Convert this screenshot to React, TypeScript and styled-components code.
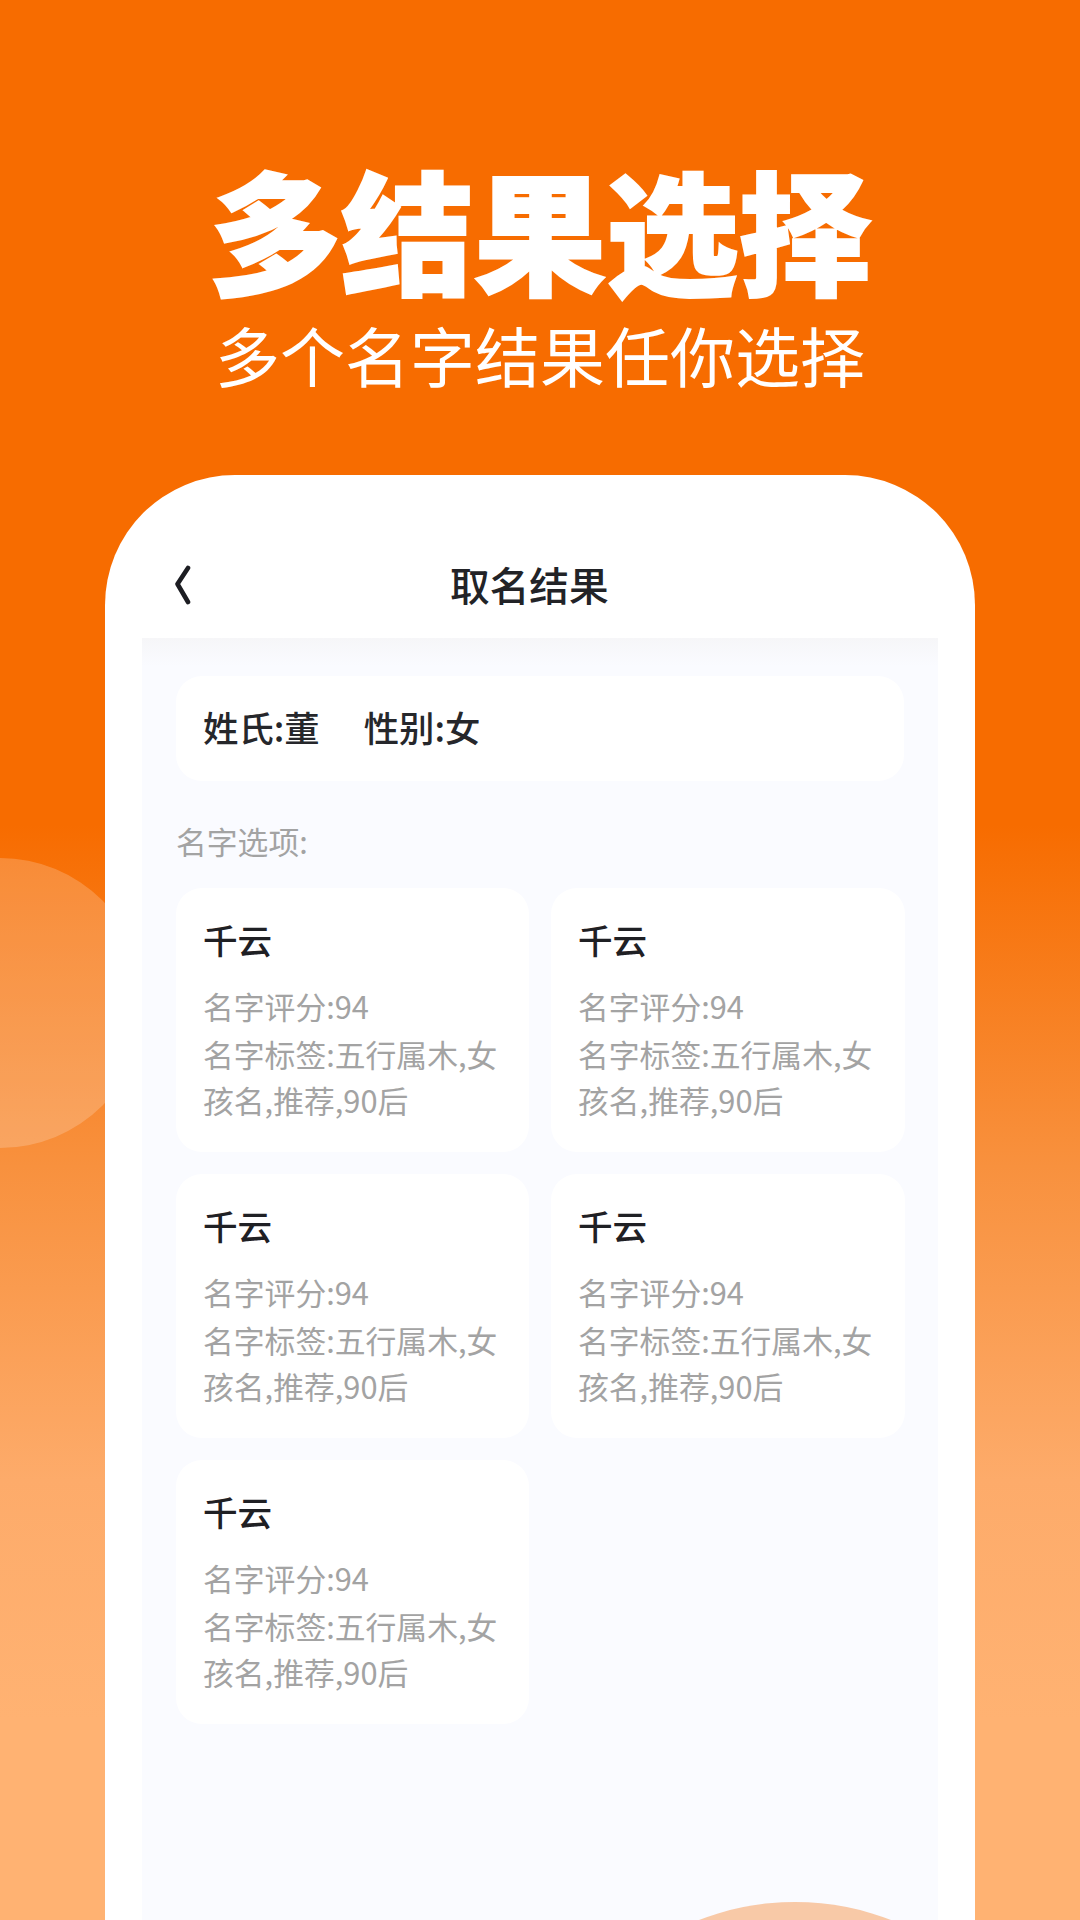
import React from "react";
import styled, { createGlobalStyle } from "styled-components";

const Global = createGlobalStyle`
  html, body { margin: 0; padding: 0; }
  body { font-family: "Noto Sans CJK SC", "Noto Sans", sans-serif; }
`;

const Screen = styled.div`
  position: relative;
  width: 1080px;
  height: 1920px;
  overflow: hidden;
  display: flex;
  flex-direction: column;
  background: linear-gradient(
    180deg,
    #f76c00 0,
    #f76c00 825px,
    #f8913e 1167px,
    #fdab6a 1480px,
    #ffb272 1720px
  );
`;

const SideCircle = styled.div`
  position: absolute;
  left: -145px;
  top: 858px;
  width: 290px;
  height: 290px;
  border-radius: 50%;
  background: rgba(255, 255, 255, 0.2);
`;

const BottomCircle = styled.div`
  position: absolute;
  left: 530px;
  top: 1902px;
  width: 530px;
  height: 530px;
  border-radius: 50%;
  background: rgba(247, 140, 60, 0.45);
`;

const Hero = styled.header`
  display: flex;
  flex-direction: column;
  align-items: center;
  height: 475px;
  padding-top: 161px;
  box-sizing: border-box;
  color: #fff;
`;

const Headline = styled.h1`
  margin: 0;
  font-size: 132.5px;
  line-height: 132px;
  font-weight: 900;
  -webkit-text-stroke: 2px #fff;
`;

const Subline = styled.p`
  margin: 17px 0 0;
  font-size: 65px;
  line-height: 88px;
  font-weight: 400;
`;

const Phone = styled.section`
  position: relative;
  flex: 1;
  margin: 0 105px;
  display: flex;
  flex-direction: column;
  background: #fff;
  border-radius: 130px 130px 0 0;
`;

const NavBar = styled.div`
  position: relative;
  height: 163px;
  box-sizing: border-box;
  padding: 56px 0 0 69px;
  display: flex;
  align-items: center;
`;

const NavTitle = styled.div`
  position: absolute;
  left: 345px;
  top: 81px;
  font-size: 39.7px;
  line-height: 56px;
  font-weight: 500;
  color: #222327;
`;

const Page = styled.main`
  flex: 1;
  margin: 0 37px;
  padding: 38px 34px 0;
  background: linear-gradient(180deg, #f6f6f8 0, #fafbff 28px);
`;

const InfoCard = styled.div`
  height: 105px;
  padding: 0 27px 4px;
  box-sizing: border-box;
  display: flex;
  align-items: center;
  gap: 44px;
  background: #fff;
  border-radius: 26px;
  font-size: 35.4px;
  font-weight: 500;
  color: #26272b;
`;

const SectionLabel = styled.div`
  margin-top: 40px;
  height: 67px;
  font-size: 30.8px;
  line-height: 40px;
  font-weight: 400;
  color: #a3a3a3;
`;

const CardGrid = styled.div`
  display: grid;
  grid-template-columns: 353px 354px;
  column-gap: 22px;
  row-gap: 22px;
`;

const NameCard = styled.article`
  height: 264px;
  box-sizing: border-box;
  padding: 27px 27px 0;
  background: #fff;
  border-radius: 26px;
`;

const Name = styled.div`
  font-size: 34.6px;
  line-height: 48px;
  font-weight: 500;
  color: #1f2024;
`;

const Detail = styled.p`
  margin: 20px 0 0;
  font-size: 30.8px;
  line-height: 46px;
  color: #a3a3a3;
`;

const Score = styled.span`
  display: block;
  margin-bottom: 2px;
`;

const Back = () => (
  <svg width="18" height="40" viewBox="0 0 18 40" fill="none">
    <path d="M14 3 L3.5 19 L14 37" stroke="#1c1d22" strokeWidth="4.6" strokeLinecap="round" strokeLinejoin="round" />
  </svg>
);

export default function App() {
  return (
    <Screen>
      <Global />
      <SideCircle />
      <Hero>
        <Headline>多结果选择</Headline>
        <Subline>多个名字结果任你选择</Subline>
      </Hero>
      <Phone>
        <NavBar>
          <Back />
          <NavTitle>取名结果</NavTitle>
        </NavBar>
        <Page>
          <InfoCard>
            <span>姓氏:董</span>
            <span>性别:女</span>
          </InfoCard>
          <SectionLabel>名字选项:</SectionLabel>
          <CardGrid>
            {[0, 1, 2, 3, 4].map((i) => (
              <NameCard key={i}>
                <Name>千云</Name>
                <Detail>
                  <Score>名字评分:94</Score>
                  名字标签:五行属木,女孩名,推荐,90后
                </Detail>
              </NameCard>
            ))}
          </CardGrid>
        </Page>
      </Phone>
      <BottomCircle />
    </Screen>
  );
}
